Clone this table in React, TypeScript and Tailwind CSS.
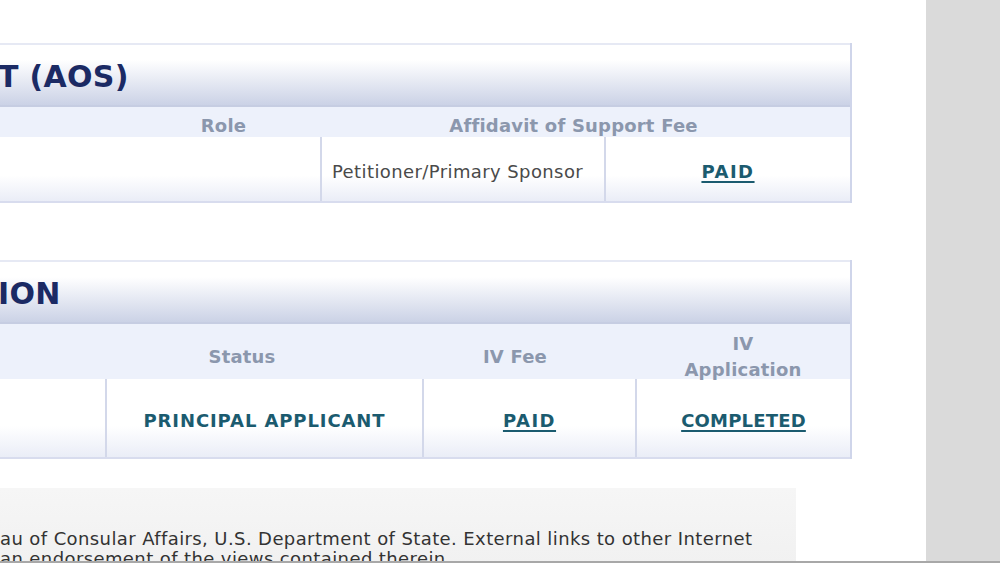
import React from 'react';

const font = { fontFamily: '"DejaVu Sans", Verdana, sans-serif' };

function TitleBand({ title }: { title: string }) {
  return (
    <div className="h-[64px] border-t-2 border-[#e6e9f4] border-b-2 border-b-[#c6cde2] bg-gradient-to-b from-white from-25% to-[#cbd2e6] flex items-center">
      <h2 className="text-[30px] font-bold text-[#1b2a64] leading-none -ml-[2px] pt-[4px] tracking-[0.3px]">{title}</h2>
    </div>
  );
}

function Link({ children, className = '' }: { children: React.ReactNode; className?: string }) {
  return (
    <a href="#" className={`font-bold text-[#1b5b6f] underline underline-offset-[3px] decoration-[1.5px] ${className}`}>
      {children}
    </a>
  );
}

export default function App() {
  return (
    <div className="w-[1000px] h-[563px] overflow-hidden flex flex-col bg-white" style={font}>
      <div className="flex flex-1 min-h-0">
        <main className="w-[926px] pt-[43px]">
          {/* AOS table */}
          <section className="w-[852px] border-r-2 border-[#cfd5ea]">
            <TitleBand title="T (AOS)" />
            <div className="grid grid-cols-[150px_147px_553px] h-[30px] bg-[#edf1fb] text-[18px] font-bold text-[#8b97ad] leading-[22px] tracking-[0.2px]">
              <div />
              <div className="flex items-center justify-center pt-[8px]">Role</div>
              <div className="flex items-center justify-center pt-[8px]">Affidavit of Support Fee</div>
            </div>
            <div className="grid grid-cols-[322px_284px_244px] h-[66px] border-b-2 border-[#d8dcee] bg-gradient-to-b from-white from-60% to-[#eaedf7] text-[18px]">
              <div className="border-r-2 border-[#d3d8ea]" />
              <div className="border-r-2 border-[#d3d8ea] flex items-center pl-[10px] pt-[4px] text-[#4a4a4a] tracking-[0.4px]">
                Petitioner/Primary Sponsor
              </div>
              <div className="flex items-center justify-center pt-[4px]">
                <Link className="tracking-[1.5px]">PAID</Link>
              </div>
            </div>
          </section>

          {/* IV application table */}
          <section className="w-[852px] border-r-2 border-[#cfd5ea] mt-[57px]">
            <TitleBand title="ION" />
            <div className="grid grid-cols-[90px_304px_242px_214px] h-[55px] bg-[#edf1fb] text-[18px] font-bold text-[#8b97ad] leading-[26px] tracking-[0.2px]">
              <div />
              <div className="flex items-center justify-center pt-[7px]">Status</div>
              <div className="flex items-center justify-center pt-[7px]">IV Fee</div>
              <div className="flex items-center justify-center text-center pt-[7px]">
                IV
                <br />
                Application
              </div>
            </div>
            <div className="grid grid-cols-[107px_317px_213px_213px] h-[80px] border-b-2 border-[#d8dcee] bg-gradient-to-b from-white from-60% to-[#eaedf7] text-[18px]">
              <div className="border-r-2 border-[#d3d8ea]" />
              <div className="border-r-2 border-[#d3d8ea] flex items-center justify-center pt-[4px] font-bold text-[#1b5b6f] tracking-[0.9px]">
                PRINCIPAL APPLICANT
              </div>
              <div className="border-r-2 border-[#d3d8ea] flex items-center justify-center pt-[4px]">
                <Link className="tracking-[1.5px]">PAID</Link>
              </div>
              <div className="flex items-center justify-center pt-[4px]">
                <Link className="tracking-[0.2px]">COMPLETED</Link>
              </div>
            </div>
          </section>

          {/* footer */}
          <footer className="w-[796px] mt-[29px] h-[120px] bg-gradient-to-b from-[#f6f6f6] to-[#eeeeee] pt-[41px] text-[18px] leading-[20px] text-[#333] whitespace-nowrap tracking-[0.4px]">
            <p>au of Consular Affairs, U.S. Department of State. External links to other Internet</p>
            <p>an endorsement of the views contained therein.</p>
          </footer>
        </main>
        <aside className="flex-1 bg-[#dadada]" />
      </div>
      <div className="h-[2px] bg-[#a8a8a8]" />
    </div>
  );
}
